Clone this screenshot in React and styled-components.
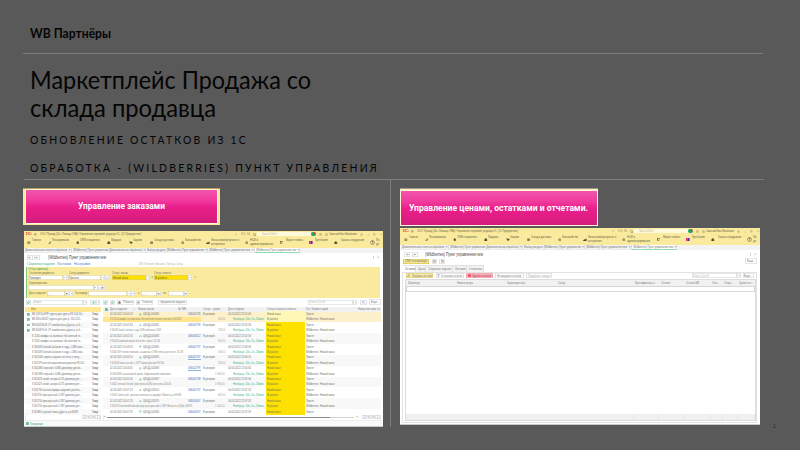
import React, { useLayoutEffect, useRef } from 'react';
import styled, { createGlobalStyle } from 'styled-components';

const Global = createGlobalStyle`
  * { box-sizing: border-box; }
  html, body { margin: 0; background: #595959; }
  body { width: 800px; height: 450px; overflow: hidden; font-family: "Liberation Sans", Arial, sans-serif; }
`;

/* ---------- text that takes exactly the given width ---------- */
const FitBox = styled.span`
  display: block;
  flex: none;
  width: ${(p) => p.$w}px;
`;
const FitText = styled.span`
  display: block;
  width: max-content;
  white-space: pre;
  transform-origin: 0 50%;
`;
function Fit({ w, children }) {
  const ref = useRef(null);
  useLayoutEffect(() => {
    const el = ref.current;
    el.style.transform = 'none';
    const natural = el.getBoundingClientRect().width;
    if (natural) el.style.transform = `scaleX(${w / natural})`;
  }, [w, children]);
  return <FitBox $w={w}><FitText ref={ref}>{children}</FitText></FitBox>;
}

/* ---------- horizontal strips with slots ---------- */
const Strip = styled.div`
  display: flex;
  align-items: center;
  flex: none;
  height: ${(p) => p.$h}px;
  background: ${(p) => p.$bg || 'transparent'};
  color: ${(p) => p.$color || '#72706a'};
  font-size: ${(p) => p.$size || 4}px;
  line-height: ${(p) => p.$lh || 4.4}px;
`;
const Slot = styled.div`
  flex: none;
  width: ${(p) => p.$w}px;
  margin-left: ${(p) => p.$gap}px;
  color: ${(p) => p.$color || 'inherit'};
`;
/* items: [x, width, content, color] measured from the strip's left edge */
function Slots({ items, ...rest }) {
  let pos = 0;
  return (
    <Strip {...rest}>
      {items.map(([x, w, content, color], i) => {
        const gap = x - pos;
        pos = x + w;
        return (
          <Slot key={i} $w={w} $gap={gap} $color={color}>
            {typeof content === 'string' ? <Fit w={w}>{content}</Fit> : content}
          </Slot>
        );
      })}
    </Strip>
  );
}

/* ---------- slide ---------- */
const Slide = styled.main`
  width: 800px;
  height: 450px;
  display: flex;
  flex-direction: column;
  background: #595959;
  color: #050505;
`;
const Brand = styled.header`
  height: 54px;
  margin: 0 37px 0 23px;
  padding: 26px 0 0 6.5px;
  border-bottom: 1px solid #7d7d7d;
  font: 700 12.6px/16px Lato, "Open Sans", sans-serif;
`;
const Intro = styled.section`
  height: 126px;
  margin: 0 36px 0 24px;
  padding: 11.5px 0 0 6px;
  border-bottom: 1px solid #7d7d7d;
`;
const Title = styled.h1`
  margin: 0;
  font: 400 24.6px/28px Lato, "Open Sans", sans-serif;
`;
const Subtitle = styled.p`
  margin: ${(p) => p.$top}px 0 0;
  font: 400 12.2px/18px Lato, "Open Sans", sans-serif;
  letter-spacing: 2.6px;
`;
const Columns = styled.section`
  height: 247px;
  display: grid;
  grid-template-columns: 391px 409px;
`;
const Column = styled.div`
  padding: 8px 0 0 ${(p) => p.$left}px;
  border-right: ${(p) => (p.$ruled ? '1px solid #7d7d7d' : '0')};
`;
const Banner = styled.div`
  display: flex;
  width: ${(p) => p.$w}px;
  height: 37px;
  padding: ${(p) => (p.$framed ? '1px 3px 2px 3px' : '2px 1px 0')};
  border-top: 1px solid ${(p) => (p.$framed ? '#b5a04f' : '#9b9b96')};
  background: ${(p) => (p.$framed ? '#fbe89a' : '#fdf0b4')};
`;
const BannerFace = styled.div`
  flex: 1;
  display: flex;
  align-items: center;
  padding: 0 0 ${(p) => p.$lift || 0}px ${(p) => p.$left}px;
  box-shadow: 0 0 0 1px #fff6da;
  background: linear-gradient(#f355ab 0%, #f03c9e 30%, #ea1f8b 52%, #df1d82 80%, #cf1e7c 100%);
  color: #fff;
  font: 700 8.3px/12px Roboto, "Liberation Sans", sans-serif;
`;
const Footer = styled.footer`
  padding: 0 24px 0 0;
  margin-top: -5px;
  text-align: right;
  font-size: 6px;
  line-height: 9px;
  color: #303030;
`;

/* ---------- application window ---------- */
const Window = styled.article`
  width: ${(p) => p.$w}px;
  height: ${(p) => p.$h}px;
  margin: ${(p) => p.$top}px 0 0 ${(p) => p.$left}px;
  display: flex;
  flex-direction: column;
  overflow: hidden;
  background: #fff;
  border-bottom: 1px solid #c6cacb;
`;
const Chrome = styled.div`
  flex: none;
  padding-left: ${(p) => p.$shift}px;
  background: #f9ea9d;
`;
const Logo = styled.b`
  display: block;
  color: #e0342c;
  font-size: 4.4px;
  letter-spacing: -0.2px;
`;
const SearchPill = styled.div`
  height: 4.4px;
  padding-left: 5px;
  background: #fff9dc;
  color: #b9b08a;
  font-size: 3.2px;
`;
const Bell = styled.div`
  width: 4.4px;
  height: 4.4px;
  border-radius: 50%;
  background: radial-gradient(circle at 80% 20%, #e7343f 0 1.2px, transparent 1.3px), #1fa562;
`;
const svgProps = { fill: 'none', stroke: 'currentColor', strokeWidth: 1.6 };
const IconSvg = styled.svg`
  display: block;
  flex: none;
  width: ${(p) => p.$s || 4}px;
  height: ${(p) => p.$s || 4}px;
`;
const shapes = {
  menu: <path d="M1 2.5h8M1 5h8M1 7.5h8" />,
  plan: <path d="M1 8h3V4h3V2h2M6 8h3" />,
  drop: <path fill="currentColor" d="M5 1l3 4-3 4-3-4z" />,
  funnel: <path strokeWidth="1.2" d="M1 1.5h8L6 5v4L4 8V5z" />,
  bag: <path fill="currentColor" d="M2 4h6v4H2zM3.5 4V2h3v2" />,
  cart: <path fill="currentColor" d="M1 2h2l1 4h4l1-3H3M4 8h1M7 8h1" />,
  grid: <path d="M2 1v8M5 1v8M8 1v8M1 5h8" />,
  chart: <path fill="currentColor" d="M1 7l3-3 2 2 3-4v6H1z" />,
  gear: <g><circle cx="5" cy="5" r="2.6" /><path d="M5 0v2M5 8v2M0 5h2M8 5h2" /></g>,
  box: <g><rect x="0.8" y="0.8" width="8.4" height="8.4" /><path d="M2 4l3 3 3-3" /></g>,
  help: <g><circle cx="5" cy="5" r="4" strokeWidth="0.9" /><path strokeWidth="1.1" d="M3.5 4q0-1.6 1.5-1.6T6.5 4Q6.5 5 5 5.4V6M5 7v.8" /></g>,
  sync: <g stroke="none"><rect width="5" height="10" fill="#e9277b" /><rect x="5" width="5" height="10" fill="#5c2ca8" /></g>,
  stop: <rect x="1" y="1" width="8" height="8" fill="#e8384f" stroke="none" />,
  bell: <path strokeWidth="1" d="M2 7q1-1 1-4 2-3 4 0 0 3 1 4zM4 9h2" />,
  clock: <g strokeWidth="1"><circle cx="5" cy="5" r="4" /><path d="M5 2v3l2 1" /></g>,
  star: <path strokeWidth="1" d="M5 1l1.2 2.7 3 .3L7 6l.7 3L5 7.5 2.3 9 3 6 .8 4l3-.3z" />,
  min: <path strokeWidth="1" d="M2 8h6" />,
  max: <path strokeWidth="1" d="M2 2h6v6H2z" />,
  close: <path strokeWidth="1" d="M2 2l6 6M8 2L2 8" />,
  search: <g strokeWidth="1.2"><circle cx="4" cy="4" r="3" /><path d="M6 6l3 3" /></g>,
  doc: <g><rect x="1" y="0.8" width="8" height="8.4" fill="#cdeedd" /><path d="M3 3h4M3 5h4M3 7h4" /></g>,
  page: <g strokeWidth="1.1"><rect x="1" y="0.8" width="8" height="8.4" /><path d="M3 3h4M3 5h4M3 7h4" /></g>,
  down: <path fill="currentColor" d="M2.5 4h5L5 7z" strokeWidth="0" />,
  back: <path d="M9 5H2M5 2L2 5l3 3" />,
  fwd: <path d="M1 5h7M5 2l3 3-3 3" />,
  dots: <path strokeWidth="2" d="M5 1v2M5 6v2" />,
  refresh: <path strokeWidth="2" d="M8 3Q5 0 2 4l1 3M2 8q4 2 6-2L7 3" />,
};
const Icon = ({ name, s }) => (
  <IconSvg viewBox="0 0 10 10" $s={s} {...svgProps}>{shapes[name]}</IconSvg>
);

const Tabs = styled.div`
  flex: none;
  display: flex;
  height: 5.5px;
  padding-left: ${(p) => p.$shift}px;
  background: #f3f3f3;
  font-size: 3.8px;
  line-height: 4.6px;
  color: #6d6d6d;
`;
const Tab = styled.div`
  display: flex;
  width: ${(p) => p.$w}px;
  height: 5.5px;
  padding-left: 1px;
  border-right: 1px solid #dcdcdc;
  border-bottom: 1px solid ${(p) => (p.$active ? '#8fdaae' : '#ececec')};
  background: ${(p) => (p.$active ? '#fff' : 'transparent')};
`;
const TabLabel = styled.div`
  width: ${(p) => p.$w}px;
  margin-right: 1.5px;
`;
const Btn = styled.div`
  display: flex;
  align-items: center;
  justify-content: ${(p) => (p.$start ? 'flex-start' : 'center')};
  gap: 1.5px;
  height: ${(p) => p.$h || 5.4}px;
  padding: 0 0.5px;
  border-radius: 1px;
  box-shadow: inset 0 0 0 0.6px ${(p) => p.$line || '#d0d0d0'};
  background: ${(p) => p.$bg || '#fff'};
  color: ${(p) => p.$color || '#777'};
  font-size: 3.8px;
  line-height: 4px;
  white-space: nowrap;
`;
const Field = styled.div`
  display: flex;
  align-items: center;
  height: 5px;
  padding-left: 1.4px;
  box-shadow: inset 0 0 0 0.6px #d7ca86;
  background: ${(p) => p.$bg || '#fff'};
  color: #5f5c48;
  font-size: 3.8px;
  line-height: 4px;
`;
const Filters = styled.div`
  flex: none;
  width: 354px;
  height: 31px;
  margin-left: 2px;
  border-left: 1px solid #80c877;
  background: #f9ea9d;
`;

const menu = [
  [3, 'menu', 8, 9, 'Главное'],
  [23.5, 'plan', 28, 17, 'Планирование'],
  [51.5, 'drop', 56, 20, 'CRM и маркетинг'],
  [83, 'bag', 87, 10, 'Продажи'],
  [105, 'cart', 108.5, 9, 'Закупки'],
  [125.5, 'grid', 129.5, 20, 'Склад и доставка'],
  [156.5, 'gear', 160.5, 16, 'Казначейство'],
  [182, 'chart', 187, 28, 'Финансовый результат и', 'контроллинг', 14],
  [220.5, 'gear', 226, 8, 'НСИ и', 'администрирование', 23],
  [255.5, 'box', 262, 17, 'Маркет плейсы'],
  [285, 'sync', 290.5, 13, 'Synchroom'],
  [310, 'bag', 316.5, 23, 'Заказы сотрудников'],
  [345.5, 'help', 352, 3.5, 'По', 'де', 3],
];
const MenuBox = styled.div`
  padding-bottom: ${(p) => (p.$two ? 0 : 3.4)}px;
  line-height: 3.2px;
  font-size: 3.7px;
`;
const menuItems = menu.flatMap(([ix, icon, tx, w, label, second, w2]) => [
  [ix, 4, <Icon name={icon} s={icon === 'help' ? 5 : 3.6} />, '#514c35'],
  [tx, Math.max(w, w2 || 0), (
    <MenuBox $two={!!second}>
      <Fit w={w}>{label}</Fit>
      {second && <Fit w={w2}>{second}</Fit>}
    </MenuBox>
  )],
]);

const titleItems = [
  [1.5, 6, <Logo>1С:</Logo>],
  [10, 3, <Icon name="menu" s={2.6} />],
  [16.3, 101, 'ООО "Прокод (20н. Помощь УФА) / Управление торговлей, редакция 11  (1С:Предприятие)'],
  [211, 3, <Icon name="page" s={2.4} />, '#c8ba7a'],
  [217, 5, 'М М+', '#a99d6a'],
  [223, 4, 'М-', '#a99d6a'],
  [229, 3.5, <Icon name="search" s={3.5} />],
  [233, 54, <SearchPill><Fit w={15}>Поиск Ctrl+Shift+F</Fit></SearchPill>],
  [287.3, 5, <Bell />],
  [295, 3, <Icon name="clock" s={3} />],
  [301, 3, <Icon name="star" s={3} />],
  [305.5, 28, 'Тимонский Иван Михайлович'],
  [336.5, 3, <Icon name="bell" s={3} />],
  [343, 3, <Icon name="min" s={2.6} />],
  [349, 3, <Icon name="max" s={2.6} />],
  [356, 3, <Icon name="close" s={2.6} />],
];
const openTabs = [
  [47.5, 42, 'Дополнительные отчеты и обработки'],
  [74, 69, '(Wildberries) Пункт управления (Дополнительная обработка)'],
  [62.5, 57, 'Выбор ресурса: (Wildberries) Пункт управления'],
  [46.5, 41, '(Wildberries) Пункт управления new'],
  [45, 40, '(Wildberries) Пункт управления new'],
];

function AppChrome({ shift }) {
  return (
    <>
      <Chrome $shift={shift}>
        <Slots $h={6.5} $size={3.7} $color="#6e6745" items={titleItems} />
        <Slots $h={10} $color="#655f42" items={menuItems} />
      </Chrome>
      <Tabs $shift={shift}>
        {openTabs.map(([w, tw, label], i) => (
          <Tab key={i} $w={w} $active={i === 4}>
            <TabLabel $w={tw}><Fit w={tw}>{label}</Fit></TabLabel>×
          </Tab>
        ))}
      </Tabs>
    </>
  );
}

/* ---------- orders window ---------- */
const Lists = styled.div`
  flex: none;
  display: grid;
  grid-template-columns: 75.5px 278px;
  column-gap: 2.5px;
  padding-left: 1px;
  height: 114.5px;
`;
const List = styled.div`
  overflow: hidden;
  box-shadow: inset 0 0 0 0.6px #d9d9d9;
`;
const Row = styled.div`
  height: 5.43px;
  background: ${(p) => p.$bg};
`;
const StatusCell = styled.div`
  height: 5.6px;
  padding: 0.6px 0 0 1px;
  background: ${(p) => p.$bg};
`;
const RightText = styled.div`
  display: flex;
  justify-content: flex-end;
`;
const LinkText = styled.div`
  background: linear-gradient(transparent 3.8px, #8fb0e0 3.8px);
`;
const ScrollTrack = styled.div`
  height: 1px;
  background: ${(p) => p.$bg};
`;

const goods = [
  ['ВК 137/1/п/ПР куртка для дев р 98-104-50...', 52], ['ВК 63/п/16/ЧТ куртка для дев р. 110-122...', 50],
  ['ВК 60023/п/3 ОТ комбинезон д/дев р. р-6...', 50], ['ВК 60097/п/1 ОТ комбинезон д/дев р. р-6...', 50],
  ['К 1510 комфы на завязках т6к желтый тк...', 50], ['К 1510 комфы на завязках т6к желтый тк...', 50],
  ['К 300093 белый,бабочки в саду +1380 ком...', 52], ['К 300093 белый,бабочки в саду +1380 ком...', 52],
  ['К 301140 сирень коралл ко лета к лету...', 49], ['К 301378 чистый корал меланж джоггер 98-104', 52],
  ['К 301380 черный к 1080 джемпер для м...', 50], ['К 301380 черный к 1080 джемпер для м...', 50],
  ['К 301423 синий, шторм к1275 джемпер для ...', 50], ['К 301423 синий, шторм к1275 джемпер для ...', 50],
  ['К 301750 пастель/ширма широкие улыбки ...', 50], ['К 301750 ярко-красный к 1387 джемпер для ...', 50],
  ['К 301750 ярко-красный к 1387 джемпер для ...', 50], ['К 301750 ярко-красный к 1387 джемпер для ...', 50],
  ['К 301861 черный темно-д/дет ж-ц м 80/86', 46],
];
const notes = [
  ['К 1510 комфы на завязках т6к желтый тюнинг ростки р 50/104', 71], ['К 300093 белый, бабочки в саду к1380 комбинезон 74/48', 51],
  ['К 300024 розовый персик бетти бел. трикот 122-64', 50], ['К 3007/09 теплая пижама, чашечка к 1980 ветка для ясел. 74-48', 73],
  ['К 401090 изысканный, к 1377 брюки детские 90/104', 54], ['К 300094 салатовый крем, бирюзовый комплект', 61],
  ['К 4002 теплый белый, принтовка к1080 толстовка 104-60', 61], ['К 3002 небесный, цветные полоски на шарфах 33мм ж-ц м 80/48', 71],
  ['К 301750 бежевый/темный узор ярко-красный к 1387 Носки ж м (54м) 104/92', 82], ['К 301820 небесная шаль корсет бел. ц м 30/56', 48],
];
const orderIds = ['466402749', '466402799', '466403012', '466402737', '466402747', '466402799', '466402748', '466402737', '466403047', '466402657'];
const numbers = ['024480', '024481', '024483', '024484', '024485', '024486', '024487', '024510', '024570', '024580'];
const times = ['02:03', '02:33', '02:53', '03:03', '04:10', '04:45', '05:56', '07:13', '07:23', '07:29'];
const prices = ['456.00', '758.00', '630.00', '446.00', '506.00', '1 906.00', '1 908.00', '849.00', '1 506.00', '1 906.00'];

function orderRow(i) {
  const n = Math.floor(i / 2);
  const status = i < 2 ? '#fff7b5' : '#ffe100';
  if (i % 2 === 0) {
    return [
      [7, 22.5, `02.03.2022 14:${times[n]}`], [36, 3, <Icon name="refresh" s={2.7} />, '#4bb47d'],
      [40, 16, `ЦФЦД-${numbers[n]}`], [85, 12.5, <LinkText><Fit w={12.5}>{orderIds[n]}</Fit></LinkText>, '#3d6fc0'],
      [100, 12, 'В резерве'], [125, 23, `04.03.2022 22:${times[n]}`],
      [162.5, 39, <StatusCell $bg={status}><Fit w={13.5}>Новый заказ</Fit></StatusCell>],
      [203, 8, 'Принят'],
    ];
  }
  return [
    [7, notes[n][1], notes[n][0], '#8a8a86'],
    [109, 13, <RightText><Fit w={prices[n].length * 1.2}>{prices[n]}</Fit></RightText>, '#a0a09b'],
    [129.5, 31, 'Ноябрьр: 24ч.,5ч.,26мин', '#43b37b'],
    [162.5, 39, <StatusCell $bg={status}><Fit w={11}>В работе</Fit></StatusCell>],
    [203, 28.5, 'Wildberries: Новый заказ'],
  ];
}
const rowTone = (i) => {
  if (i === 0) return '#fdf1cb';
  if (i === 1) return 'linear-gradient(90deg, #ffe68c 98px, #fdf1cb 98px)';
  return Math.floor(i / 2) % 2 ? '#fff' : '#f8f8f8';
};

const select = (w, bg, label, lw) => <Field $bg={bg}><Fit w={lw}>{label}</Fit></Field>;
const mini = (icon, s = 3) => <Btn $h={5}><Icon name={icon} s={s} /></Btn>;
const more = <Btn $h={5.2}><Fit w={8}>Еще -</Fit></Btn>;
const pager = (x) => ['|', '<', '>', '|'].map((t, i) => [x + i * 4.5, 4.2, <Btn $h={4.2}>{t}</Btn>]);

function OrdersWindow() {
  return (
    <Window $w={359} $h={196} $top={6} $left={1}>
      <AppChrome shift={0} />
      <Slots $h={8} $size={5.3} $lh={6} $color="#444" items={[
        [2.5, 6, mini('back')], [9.5, 6, mini('fwd')],
        [24, 58, '(Wildberries) Пункт управления new'],
        [347.5, 3, <Icon name="dots" s={3} />], [353, 3, <Icon name="close" s={2.5} />],
      ]} />
      <Slots $h={5.5} $size={4.4} items={[
        [2.5, 28, 'Сборочные задания', '#3ea87c'], [33, 14, 'Поставки', '#4b79c8'],
        [50, 16, 'Настройки', '#4b79c8'], [113.5, 45, 'СПБ: Интернет-Магазин, Проход, Склад', '#b5b5b5'],
      ]} />
      <Filters>
        <Slots $h={5} items={[[0.5, 20, 'Отбор (фильтр)', '#3b9e62']]} />
        <Slots $h={3.6} $size={3.7} $color="#746d47" items={[
          [1.5, 25, 'Состояние документа'], [41.5, 20, 'Статус документа'], [85, 16, 'Статус заказа'], [127, 17, 'Статус клиента'],
        ]} />
        <Slots $h={5.4} items={[
          [1, 35, select(35, '#fff', 'Проведен', 12)], [36, 3.5, mini('down')],
          [41, 33, select(33, '#fff', 'Принято', 10)], [74, 4, mini('down')], [78, 4, mini('max', 2)],
          [85, 34, select(34, '#ffe100', 'Новый заказ', 15)], [119, 4, mini('down')], [124, 2, '?', '#58a98b'],
          [127, 34, select(34, '#ffe100', 'В работе', 12)], [161, 4, mini('down')], [166.5, 2, '?', '#58a98b'],
        ]} />
        <Slots $h={4.5} $size={3.7} $color="#746d47" items={[[1.5, 18, 'Характеристика']]} />
        <Slots $h={5.5} items={[[1, 66, <Field />], [67, 3.8, mini('down')], [70.8, 3.8, mini('max', 2)], [74.6, 3.8, mini('page', 2)]]} />
        <Slots $h={6.4} $size={3.7} $color="#746d47" items={[
          [1.5, 17, 'Дата создания'], [20, 18, <Field>{' . .'}</Field>], [38, 4, mini('page', 2)], [42, 4, mini('down')],
          [48, 12, 'За период'], [61, 39, <Field />], [100, 4, mini('dots', 2)], [104, 4, mini('down')], [111, 1.5, 'с'],
          [114, 16, <Field>{' . .'}</Field>], [130, 4, mini('page', 2)], [136, 3, 'по'], [141, 16, <Field>{' . .'}</Field>], [157, 4, mini('page', 2)],
        ]} />
      </Filters>
      <Slots $h={9} items={[
        [2, 5, <Btn $h={5} $color="#32a56b"><Icon name="refresh" s={3} /></Btn>],
        [9, 50, <Btn $start $h={5} $color="#aaa"><Fit w={7}>Поиск</Fit></Btn>], [59, 4, mini('down')],
        [66, 6, <Btn $h={5} $color="#32a56b"><Icon name="refresh" s={3} /></Btn>], [72, 4, mini('down')],
        [79, 5, <Btn $h={5} $color="#32a56b"><Icon name="refresh" s={3} /></Btn>],
        [86, 5, <Btn $h={5} $color="#32a56b"><Icon name="refresh" s={3} /></Btn>],
        [93, 17, <Btn $h={5}><Icon name="bag" s={3} /><Fit w={10}>Печать</Fit></Btn>],
        [112, 17, <Btn $h={5}><Icon name="menu" s={3} /><Fit w={10}>Отметка</Fit></Btn>],
        [134, 29, <Btn $h={5}><Fit w={25}>Оформление продажи</Fit></Btn>],
        [284, 45, <Btn $start $h={5} $color="#b5b5b5"><Fit w={16}>Поиск (Ctrl+F)</Fit></Btn>], [329, 4, mini('down')],
        [335.5, 7, <Btn $h={5} $color="#4b79c8"><Icon name="search" s={3} /></Btn>], [345, 11.5, more],
      ]} />
      <Lists>
        <List>
          <Slots $h={5} $bg="#ffe795" items={[[6, 5, 'Имя', '#8f7733']]} />
          {goods.map(([name, w], i) => (
            <Row key={i} $bg={i % 2 ? '#fff' : '#f9f9f9'}>
              <Slots $h={5.4} items={[
                [2, 3, i < 4 ? <Icon name="doc" s={2.8} /> : <i />, '#32a56b'],
                [6.5, w, name], [67, 6, 'Товар', '#444'],
              ]} />
            </Row>
          ))}
          <Slots $h={5.2} items={pager(57)} />
        </List>
        <List>
          <Slots $h={5} $bg="#f1f1f1" $color="#7b7b7b" items={[
            [1.5, 3, <Icon name="doc" s={3} />, '#32a56b'], [7, 17, 'Дата создания'], [30, 2, '↓'], [35, 16, 'Номер заказа'], [75, 8, '№ WB'],
            [100, 17, 'Статус - сумма'], [125, 16, 'Дата отгрузки'], [163.5, 29, 'Статусы заказа и клиента'],
            [203, 22, 'Гос. Комментарий'], [255, 22, 'Номер поставки, ко'],
          ]} />
          {Array.from({ length: 19 }, (_, i) => (
            <Row key={i} $bg={rowTone(i)}><Slots $h={5.4} items={orderRow(i)} /></Row>
          ))}
          <Slots $h={5.2} items={[
            [1, 2, '‹'], [4, 223, <ScrollTrack $bg="#8b8b8b" />], [227, 24, <ScrollTrack $bg="#d2d2d2" />], [253, 2, '›'], ...pager(259),
          ]} />
        </List>
      </Lists>
      <Slots $h={5.6} $bg="#f8faf9" items={[[2, 3, <Icon name="doc" s={3} />, '#32a56b'], [6, 13, 'Планировщик', '#32a56b']]} />
    </Window>
  );
}

/* ---------- stock window ---------- */
const StockPage = styled.div`
  flex: none;
  width: 355px;
  height: 151px;
  margin-left: 2px;
  border: 1px solid #e2e2e2;
`;
const StockTable = styled.div`
  width: 350.5px;
  height: 141.6px;
  margin-left: 2px;
  display: flex;
  flex-direction: column;
  border: 1px solid #dcdcdc;
`;
const CurrentRow = styled.div`
  flex: none;
  height: 6px;
  border: 1px solid #d6d6d6;
`;
const TableFoot = styled.div`
  height: 6px;
  margin-top: auto;
  display: grid;
  grid-template-columns: 227.5px 25.5px 25.5px 26px 12px 15px 1fr;
  background: #f0f0f0;
`;
const FootCell = styled.div`
  border-right: 1px solid #e6e6e6;
`;
const PageTabs = styled.div`
  flex: none;
  display: flex;
  height: 6.5px;
  margin: 1px 0 0 3px;
  font-size: 4px;
  line-height: 5.6px;
`;
const PageTab = styled.div`
  width: ${(p) => p.$w}px;
  padding-left: 1.5px;
  border: 1px solid #e0e0e0;
  border-width: 1px 1px 0 0;
  background: ${(p) => (p.$active ? '#fff' : '#f3f3f3')};
  color: ${(p) => (p.$active ? '#555' : '#747474')};
`;
const pageTabs = [[13, 10, 'Остатки'], [10, 7, 'Цены'], [27, 23, 'Сборочные задания'], [14, 10.5, 'Поставки'], [17, 13, 'Статистика']];

function StockWindow() {
  return (
    <Window $w={360} $h={197} $top={3} $left={0}>
      <AppChrome shift={1} />
      <Slots $h={8} $size={5.3} $lh={6} $color="#444" items={[
        [4, 6, mini('back')], [11.5, 6, mini('fwd')], [24.5, 58, '(Wildberries) Пункт управления new'],
        [348.5, 3, <Icon name="dots" s={3} />], [354, 3, <Icon name="close" s={2.5} />],
      ]} />
      <Slots $h={6} items={[
        [2.5, 26.5, <Btn $bg="#f9e78d" $line="#cfb94a" $h={5}><Fit w={22}>CRM планировщик</Fit></Btn>],
        [32, 5, mini('page')], [39, 6, <Btn $h={5} $color="#b36b55"><Icon name="page" s={3} /></Btn>], [345, 12, more],
      ]} />
      <PageTabs>
        {pageTabs.map(([w, tw, label], i) => (
          <PageTab key={i} $w={w} $active={i === 0}><Fit w={tw}>{label}</Fit></PageTab>
        ))}
      </PageTabs>
      <StockPage>
        <Slots $h={6.6} items={[
          [3, 27, <Btn $bg="#faeca6" $line="#d3c164"><Icon name="plan" s={3} /><Fit w={20}>Получить остатки</Fit></Btn>],
          [32.5, 28, <Btn><Icon name="funnel" s={3} /><Fit w={21}>Установить остатки</Fit></Btn>],
          [63, 26.5, <Btn $bg="#ffabb8" $line="#efabb6" $color="#8e4853"><Icon name="stop" s={3} /><Fit w={19}>Удалить остатки</Fit></Btn>],
          [92, 28.5, <Btn><Fit w={24}>Не выгружать остатки</Fit></Btn>],
          [122.5, 26, <Btn $color="#aaa"><Fit w={22}>Подобрать товары</Fit></Btn>],
          [289, 45, <Btn $start $color="#b5b5b5"><Fit w={16}>Поиск (Ctrl+F)</Fit></Btn>], [334, 4, mini('down')],
          [339.5, 11.5, more],
        ]} />
        <StockTable>
          <Slots $h={5.5} $bg="#f1f1f1" $color="#7b7b7b" items={[
            [1.5, 11.5, 'Штрихкод'], [50.5, 16, 'Номенклатура'], [101, 18, 'Характеристика'], [151.5, 7, 'Склад'],
            [228.5, 21, 'Идентификатор ск...'], [254.5, 9, 'Остаток'], [280, 13, 'Остаток WB'],
            [306, 7, 'Обно...'], [318, 9, 'Отпра...'], [332.5, 14, 'Удалить ост...'],
          ]} />
          <CurrentRow />
          <TableFoot>{Array.from({ length: 7 }, (_, i) => <FootCell key={i} />)}</TableFoot>
        </StockTable>
      </StockPage>
    </Window>
  );
}

export default function App() {
  return (
    <Slide>
      <Global />
      <Brand><Fit w={81}>WB Партнёры</Fit></Brand>
      <Intro>
        <Title>
          <Fit w={281}>Маркетплейс Продажа со</Fit>
          <Fit w={186}>склада продавца</Fit>
        </Title>
        <Subtitle $top={9.5}><Fit w={218}>ОБНОВЛЕНИЕ ОСТАТКОВ ИЗ 1С</Fit></Subtitle>
        <Subtitle $top={9.5}><Fit w={349}>ОБРАБОТКА - (WILDBERRIES) ПУНКТ УПРАВЛЕНИЯ</Fit></Subtitle>
      </Intro>
      <Columns>
        <Column $left={23} $ruled>
          <Banner $w={197} $framed><BannerFace $left={52} $lift={2}><Fit w={87}>Управление заказами</Fit></BannerFace></Banner>
          <OrdersWindow />
        </Column>
        <Column $left={9}>
          <Banner $w={198}><BannerFace $left={8}><Fit w={179}>Управление ценами, остатками и отчетами.</Fit></BannerFace></Banner>
          <StockWindow />
        </Column>
      </Columns>
      <Footer>1</Footer>
    </Slide>
  );
}
